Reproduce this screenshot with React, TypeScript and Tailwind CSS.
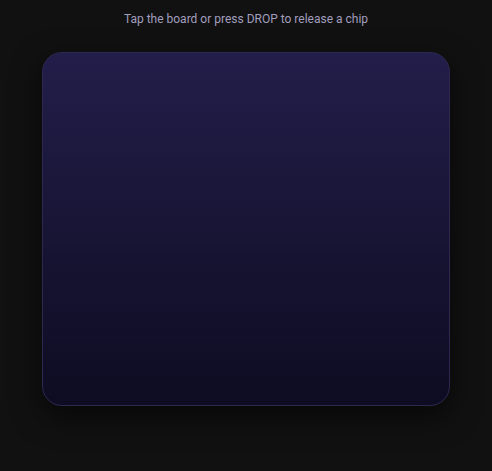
export default function App() {
    return (
        <div className="min-h-[471px] bg-[#111111] flex flex-col items-center" style={{fontFamily: 'Roboto, "Liberation Sans", sans-serif'}}>
            <p className="mt-[11px] text-[12px] leading-[16px] text-[#a29ebd]">
                Tap the board or press DROP to release a chip
            </p>
            <div className="mt-[25px] w-[408px] h-[354px] rounded-[20px] border border-[#2c2850] bg-gradient-to-b from-[#221e4a] to-[#0e0c22] shadow-[0_10px_30px_rgba(0,0,0,0.6)]" />
        </div>
    );
}
